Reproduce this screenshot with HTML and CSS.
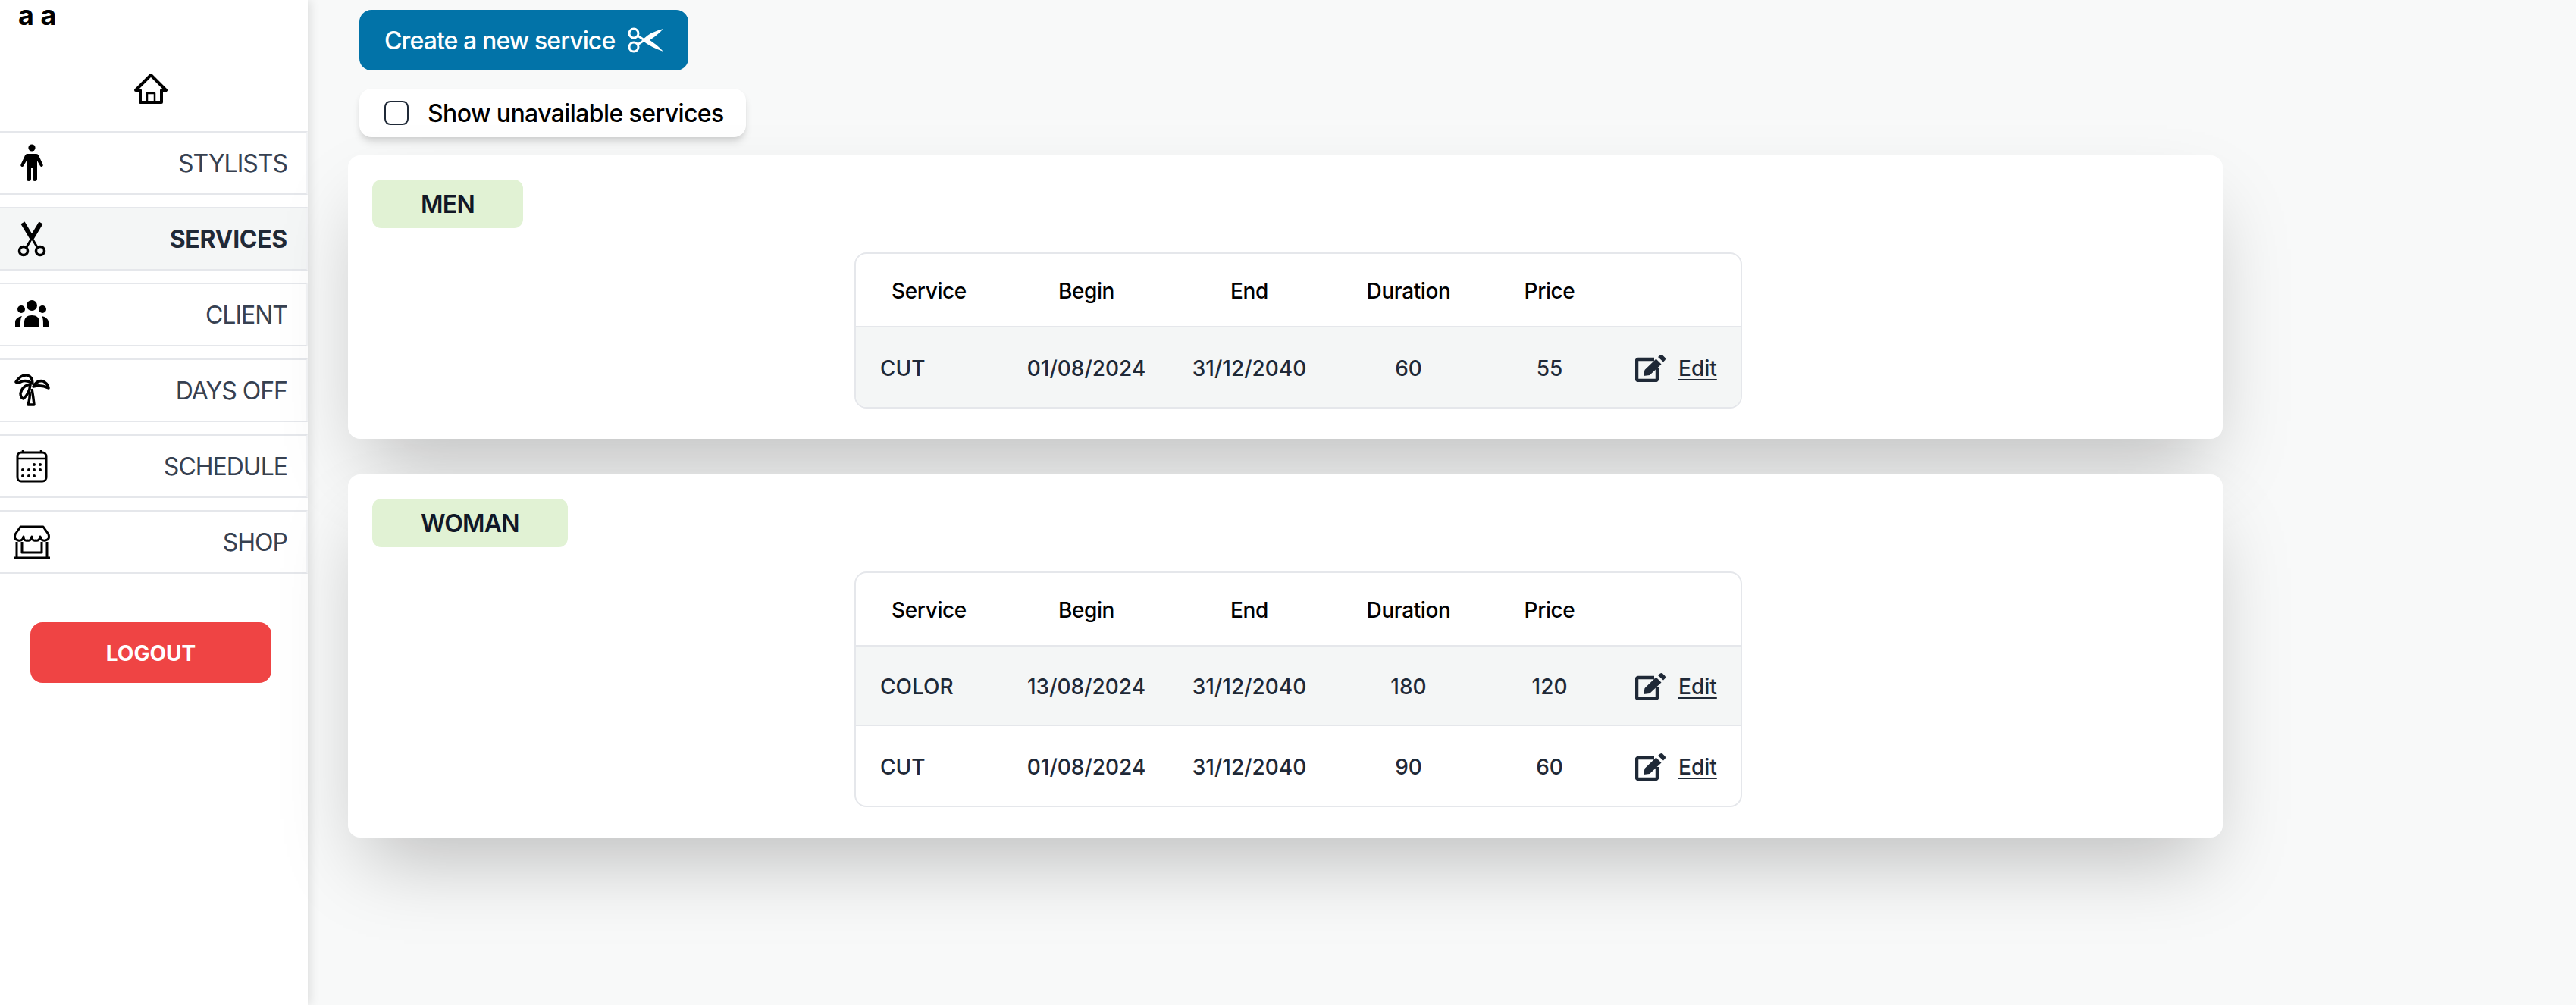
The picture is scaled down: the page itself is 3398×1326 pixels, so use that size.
FILE: index.html
```html
<!DOCTYPE html>
<html lang="en">
<head>
    <meta charset="UTF-8">
    <title>Services</title>
    <link rel="stylesheet" href="styles.css">
</head>
<body>

<aside class="sidebar">
    <div class="user">a a</div>
    <a class="home"><svg width="46" height="42" viewBox="176 96 46 42" fill="none" stroke="#000" stroke-width="4" stroke-linejoin="round" stroke-linecap="round"><path d="M185 118H179L199 98L219 118H213V134H185Z"/><path d="M194 134V122H204V134" stroke-width="2.5"/></svg></a>

    <nav>
        <a class="nav-item"><svg class="nav-icon" width="48" height="50" viewBox="18 190 48 50" fill="#000"><circle cx="42" cy="195" r="4.6"/><path d="M36 203H48Q50 203 51 205L56.500 217A2 2 0 0 1 53 219L49 212V236A3 3 0 0 1 43 236V222H41V236A3 3 0 0 1 35 236V212L31 219A2 2 0 0 1 27.500 217L33 205Q34 203 36 203Z"/></svg><span>STYLISTS</span></a>
        <a class="nav-item active"><svg class="nav-icon" width="48" height="50" viewBox="18 292 48 50" fill="none" stroke="#000"><path d="M30 296L42 316M54 296L42 316" stroke-width="6"/><path d="M42 316L35 328M42 316L49 328" stroke-width="3"/><circle cx="31" cy="333" r="5.500" stroke-width="3.500"/><circle cx="53" cy="333" r="5.500" stroke-width="3.500"/></svg><span>SERVICES</span></a>
        <a class="nav-item"><svg class="nav-icon" width="48" height="38" viewBox="18 398 48 38" fill="#000"><circle cx="42" cy="405" r="7"/><circle cx="28" cy="410" r="5"/><circle cx="56" cy="410" r="5"/><path d="M32 433V427C32 421 36 418 42 418C48 418 52 421 52 427V433Z"/><path d="M20 433V427C20 423 24 420 29 419C27 422 27 425 27 433Z"/><path d="M64 433V427C64 423 60 420 55 419C57 422 57 425 57 433Z"/></svg><span>CLIENT</span></a>
        <a class="nav-item"><svg class="nav-icon" width="48" height="44" viewBox="18 494 48 44" fill="none" stroke="#000" stroke-width="3.500" stroke-linejoin="round"><path d="M21 505Q27 495 36 496Q43 498 43 507Q34 501 27 505Q24 507 21 505Z"/><path d="M44 511Q49 502 57 504Q63 507 64 513Q54 508 44 511Z"/><path d="M40 508Q29 510 27 520Q27 526 31 527Q39 520 40 508Z"/><path d="M42 514Q44 525 45 535H37Q40 525 39 518"/></svg><span>DAYS OFF</span></a>
        <a class="nav-item"><svg class="nav-icon" width="48" height="44" viewBox="18 593 48 44" fill="#000"><rect x="23" y="597" width="38" height="38" rx="5" fill="none" stroke="#000" stroke-width="3"/><path d="M23 605H61M30 594V598M54 594V598" stroke="#000" stroke-width="2.500"/><circle cx="45" cy="613" r="2"/><circle cx="53" cy="613" r="2"/><circle cx="30" cy="620" r="2"/><circle cx="38" cy="620" r="2"/><circle cx="45" cy="620" r="2"/><circle cx="53" cy="620" r="2"/><circle cx="30" cy="628" r="2"/><circle cx="38" cy="628" r="2"/><circle cx="45" cy="628" r="2"/></svg><span>SCHEDULE</span></a>
        <a class="nav-item"><svg class="nav-icon" width="48" height="46" viewBox="18 693 48 46" fill="none" stroke="#000" stroke-width="3" stroke-linejoin="round"><path d="M27 696H57L64 706Q66 713 60 714Q54 715 53 709Q52 715 47 714Q42 715 42 709Q41 715 36 714Q31 715 31 709Q30 715 24 714Q18 713 20 706Z"/><path d="M22 716V737M62 716V737M18 737H66M29 716V730H55V716"/></svg><span>SHOP</span></a>
    </nav>

    <button class="logout">LOGOUT</button>
</aside>

<main class="content">
    <button class="btn-create">Create a new service
        <svg width="47" height="36" viewBox="828 35 47 36" fill="none" stroke="#fff" stroke-width="3"><circle cx="836" cy="44" r="6"/><circle cx="836" cy="62" r="6"/><path d="M841 47L850 53"/><path d="M841 59L850 53"/><path d="M848 52Q858 42 875 38Q866 48 852 56Z" fill="#fff" stroke="none"/><path d="M848 54Q858 62 875 68Q866 58 852 50Z" fill="#fff" stroke="none"/></svg>
    </button>

    <label class="toggle"><span class="box"></span>Show unavailable services</label>

    <section class="card">
        <h2 class="badge">MEN</h2>
        <div class="table-wrap">
            <table>
                <colgroup><col class="c1"><col class="c2"><col class="c3"><col class="c4"><col class="c5"><col class="c6"></colgroup>
                <thead>
                    <tr><th>Service</th><th>Begin</th><th>End</th><th>Duration</th><th>Price</th><th></th></tr>
                </thead>
                <tbody>
                    <tr class="odd">
                        <td class="name">CUT</td><td>01/08/2024</td><td>31/12/2040</td><td>60</td><td>55</td>
                        <td class="edit"><a><svg width="40" height="36" viewBox="0 0 40 36"><path d="M25 6H4A2 2 0 0 0 2 8V32A2 2 0 0 0 4 34H27A2 2 0 0 0 29 32V18" fill="none" stroke="#1f2937" stroke-width="4.500"/><path d="M11 28L12.500 20L27.500 5.500L34.500 12.500L19 27ZM30 3L33 .5Q34.500 -.5 36 .5L39.500 4Q40.500 5.500 39.500 7L37 9.500Z" fill="#1f2937"/></svg><span>Edit</span></a></td>
                    </tr>
                </tbody>
            </table>
        </div>
    </section>

    <section class="card">
        <h2 class="badge">WOMAN</h2>
        <div class="table-wrap">
            <table>
                <colgroup><col class="c1"><col class="c2"><col class="c3"><col class="c4"><col class="c5"><col class="c6"></colgroup>
                <thead>
                    <tr><th>Service</th><th>Begin</th><th>End</th><th>Duration</th><th>Price</th><th></th></tr>
                </thead>
                <tbody>
                    <tr class="odd">
                        <td class="name">COLOR</td><td>13/08/2024</td><td>31/12/2040</td><td>180</td><td>120</td>
                        <td class="edit"><a><svg width="40" height="36" viewBox="0 0 40 36"><path d="M25 6H4A2 2 0 0 0 2 8V32A2 2 0 0 0 4 34H27A2 2 0 0 0 29 32V18" fill="none" stroke="#1f2937" stroke-width="4.500"/><path d="M11 28L12.500 20L27.500 5.500L34.500 12.500L19 27ZM30 3L33 .5Q34.500 -.5 36 .5L39.500 4Q40.500 5.500 39.500 7L37 9.500Z" fill="#1f2937"/></svg><span>Edit</span></a></td>
                    </tr>
                    <tr>
                        <td class="name">CUT</td><td>01/08/2024</td><td>31/12/2040</td><td>90</td><td>60</td>
                        <td class="edit"><a><svg width="40" height="36" viewBox="0 0 40 36"><path d="M25 6H4A2 2 0 0 0 2 8V32A2 2 0 0 0 4 34H27A2 2 0 0 0 29 32V18" fill="none" stroke="#1f2937" stroke-width="4.500"/><path d="M11 28L12.500 20L27.500 5.500L34.500 12.500L19 27ZM30 3L33 .5Q34.500 -.5 36 .5L39.500 4Q40.500 5.500 39.500 7L37 9.500Z" fill="#1f2937"/></svg><span>Edit</span></a></td>
                    </tr>
                </tbody>
            </table>
        </div>
    </section>
</main>

</body>
</html>
```

FILE: styles.css
```css
* {
    box-sizing: border-box;
}
html, body {
    height: 100%;
}
body {
    margin: 0;
    display: flex;
    overflow: hidden;
    font-family: Inter, "Liberation Sans", sans-serif;
    background-color: #f8f9f9;
    color: #111827;
}

/* sidebar */
.sidebar {
    width: 406px;
    flex-shrink: 0;
    height: 100%;
    background-color: #fff;
    box-shadow: 4px 0 12px rgba(0, 0, 0, 0.1);
}
.user {
    height: 48px;
    padding-left: 24px;
    font-size: 36px;
    font-weight: 700;
    line-height: 40px;
    color: #000;
}
.home {
    display: flex;
    justify-content: center;
    height: 125px;
    padding: 49px 8px 0 0;
}
.nav-item {
    display: flex;
    align-items: center;
    justify-content: space-between;
    height: 84px;
    margin-bottom: 16px;
    padding: 0 25px 0 18px;
    border-top: 2px solid #e5e7eb;
    border-bottom: 2px solid #e5e7eb;
    border-right: 2px solid #f3f4f6;
    font-size: 32px;
    letter-spacing: -1px;
    color: #374151;
}
.nav-item.active {
    background-color: #f4f6f6;
    color: #1f2937;
    font-weight: 700;
    letter-spacing: -0.3px;
}
.logout {
    display: block;
    width: 318px;
    height: 80px;
    margin: 64px 0 0 40px;
    padding-top: 2px;
    border: 0;
    border-radius: 16px;
    background-color: #ef4444;
    color: #fff;
    font-family: inherit;
    font-size: 28px;
    font-weight: 700;
}

/* main part */
.content {
    flex: 1;
    padding: 13px 0 0 53px;
}
.btn-create {
    display: flex;
    align-items: center;
    gap: 17px;
    height: 80px;
    margin: 0 0 24px 15px;
    padding: 0 33px;
    border: 0;
    border-radius: 16px;
    background-color: #0273a8;
    color: #fff;
    font-family: inherit;
    font-size: 32px;
    font-weight: 500;
    letter-spacing: -0.9px;
}
.toggle {
    display: flex;
    align-items: center;
    gap: 25px;
    width: 510px;
    height: 64px;
    margin: 0 0 24px 15px;
    padding-left: 33px;
    border-radius: 16px;
    background-color: #fff;
    box-shadow: 0 8px 12px -2px rgba(0, 0, 0, 0.12), 0 4px 8px -2px rgba(0, 0, 0, 0.08);
    font-size: 32px;
    font-weight: 500;
    letter-spacing: -0.6px;
    color: #000;
}
.box {
    width: 32px;
    height: 32px;
    border: 2px solid #1f2937;
    border-radius: 8px;
    background-color: #fff;
}
.card {
    width: 2473px;
    margin-bottom: 47px;
    padding: 32px 0 40px 32px;
    border-radius: 16px;
    background-color: #fff;
    box-shadow: 0 50px 100px -24px rgba(0, 0, 0, 0.25);
}
.badge {
    display: inline-block;
    min-width: 199px;
    height: 64px;
    margin: 0;
    padding: 2px 64px 0;
    border-radius: 12px;
    background-color: #e1f2d4;
    font-size: 32px;
    font-weight: 600;
    line-height: 62px;
    letter-spacing: -0.8px;
    text-align: center;
    color: #111827;
}
.table-wrap {
    width: 1171px;
    margin: 32px 0 0 636px;
    border: 2px solid #e5e7eb;
    border-radius: 16px;
    overflow: hidden;
}
table {
    width: 1167px;
    table-layout: fixed;
    border-collapse: collapse;
    font-size: 28px;
}
.c1 { width: 193px; }
.c2 { width: 222px; }
.c3 { width: 208px; }
.c4 { width: 212px; }
.c5 { width: 160px; }
.c6 { width: 172px; }
th {
    height: 96px;
    padding: 2px 0 0;
    font-weight: 500;
    letter-spacing: -0.4px;
    color: #000;
}
thead tr {
    border-bottom: 2px solid #e5e7eb;
}
tbody tr {
    border-bottom: 2px solid #e5e7eb;
}
tbody tr:last-child {
    border-bottom: 0;
}
tbody tr:last-child td {
    height: 106px;
}
td {
    height: 105px;
    padding: 2px 0 0;
    text-align: center;
    font-weight: 450;
    color: #1f2937;
}
.odd {
    background-color: #f4f6f6;
}
td.name {
    padding-left: 32px;
    text-align: left;
}
td.edit a {
    display: flex;
    align-items: center;
    gap: 17px;
    padding-left: 33px;
}
td.edit span {
    text-decoration: underline;
    text-decoration-thickness: 2px;
    text-underline-offset: 4px;
}
```
